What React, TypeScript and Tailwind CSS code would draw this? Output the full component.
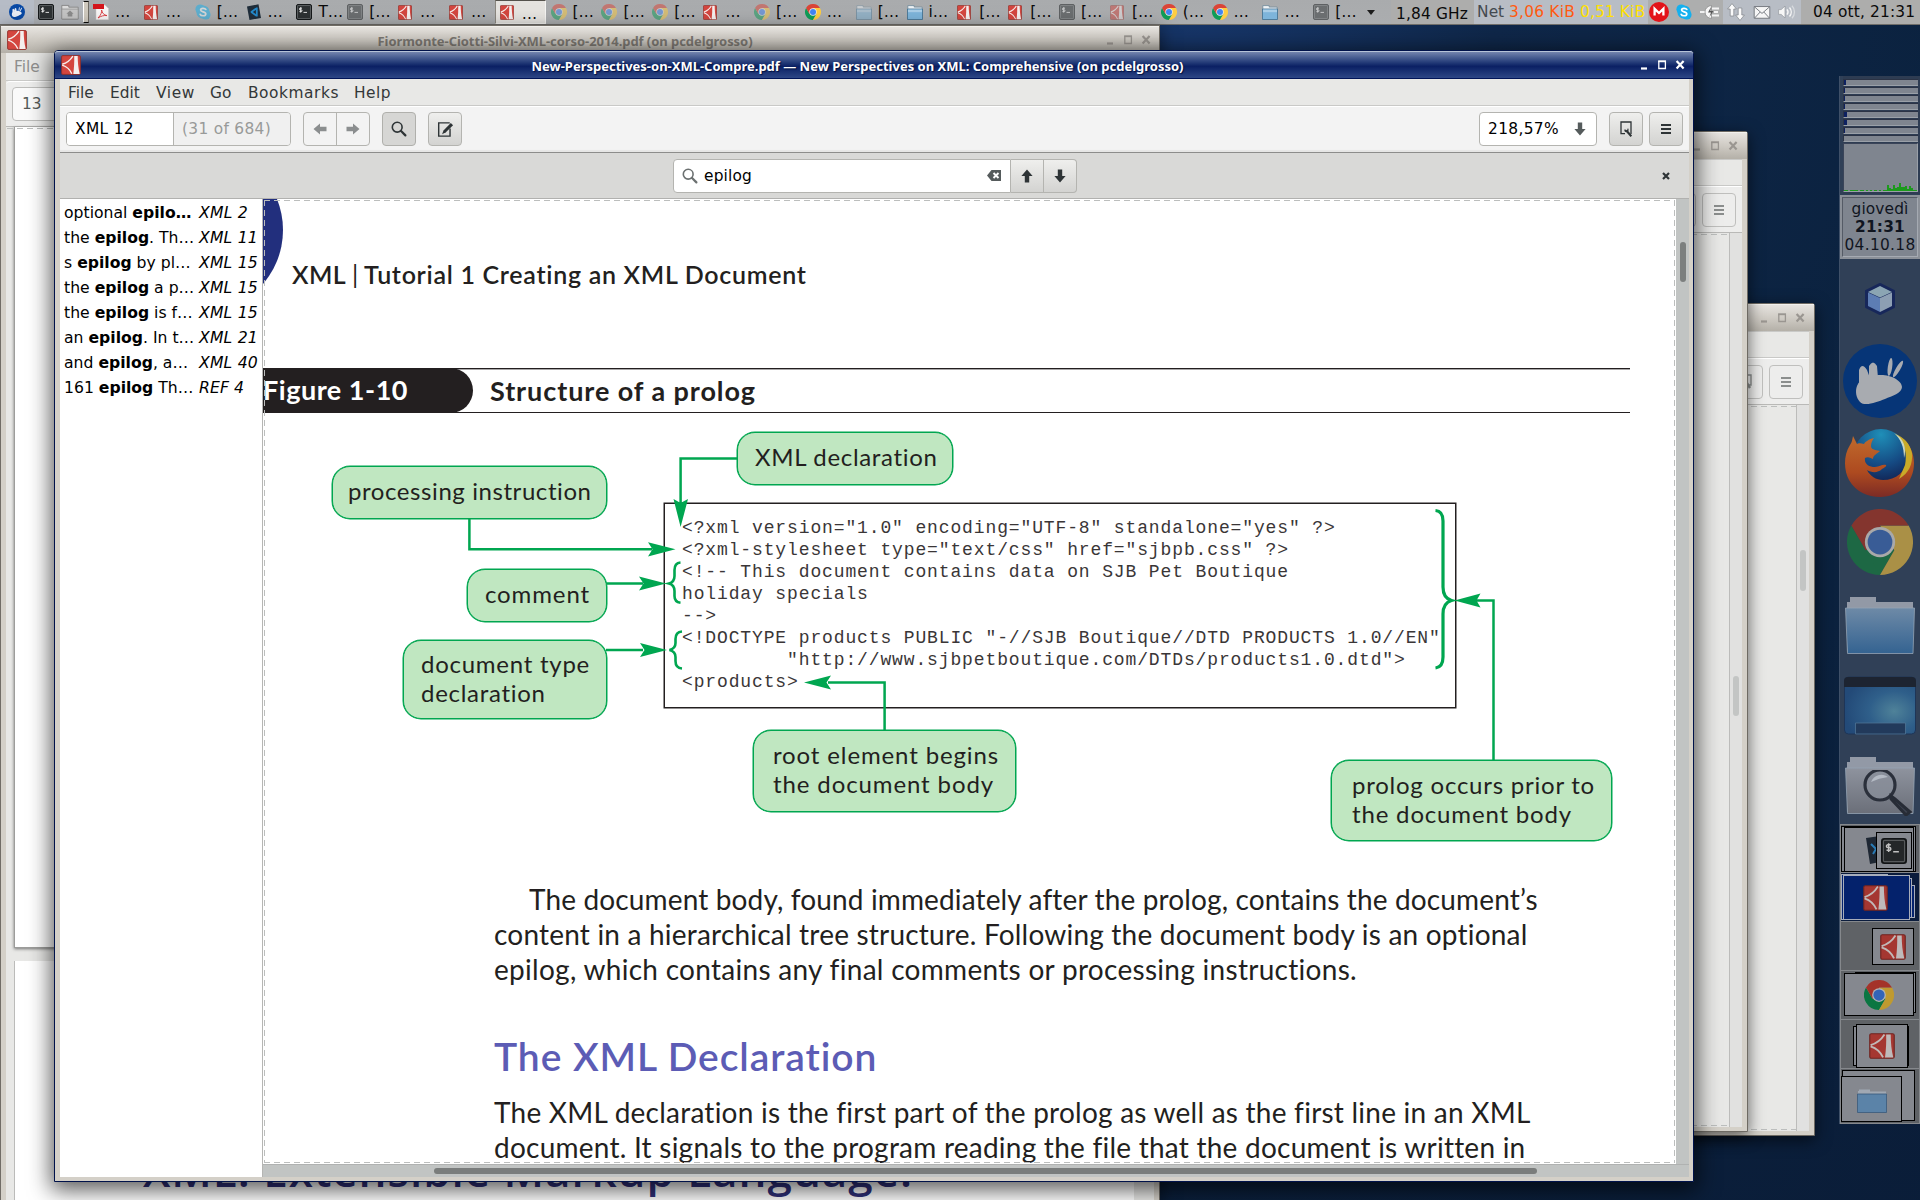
import React, { useLayoutEffect, useRef, useState } from "react";

/* ---------- text helper: spreads a line's letters over a given measure ---------- */
function Fit({ w, className = "", children }: { w: number; className?: string; children: string }) {
  const ref = useRef<HTMLSpanElement>(null);
  const [ls, setLs] = useState(0);
  useLayoutEffect(() => {
    const el = ref.current;
    if (!el) return;
    el.style.letterSpacing = "0px";
    const n = el.getBoundingClientRect().width;
    const v = (w - n) / children.length;
    el.style.letterSpacing = v + "px";
    setLs(v);
  }, [w, children]);
  return (
    <span ref={ref} className={"inline-block whitespace-pre " + className} style={{ letterSpacing: ls + "px" }}>
      {children}
    </span>
  );
}

/* ---------- icons ---------- */
type IP = { className?: string };

const Evince = ({ className = "" }: IP) => (
  <svg viewBox="0 0 20 20" preserveAspectRatio="none" className={className}>
    <rect x="0.6" y="0.6" width="18.8" height="18.8" rx="1.2" fill="#d4463f" stroke="#8e2f2a" strokeWidth="0.9" />
    <path d="M13.2 1.1h3.5c0 6 .6 12 2 17.800h-6.400c.8-6 1.100-12 .9-17.800z" fill="#f4efee" />
    <path d="M11.900 1.200C9.400 5.200 5.400 8.200 1.200 9.300M1.200 10.200C5.600 11.600 9 14.600 10.800 18.800" fill="none" stroke="#f7eeec" strokeWidth="1.400" />
  </svg>
);

const Chrome = ({ className = "" }: IP) => (
  <svg viewBox="0 0 48 48" className={className}>
    <path d="M24 24 24 48A24 24 0 0 1 3.2 12L13.6 30z" fill="#0f9d58" />
    <path d="M13.600 30 24 48 34.400 30 24 24z" fill="#0f9d58" />
    <path d="M24 12H44.8A24 24 0 0 1 24 48L34.4 30z" fill="#ffcd40" />
    <path d="M3.2 12 13.6 30 24 24 24 12 44.8 12A24 24 0 0 0 3.2 12z" fill="#db4437" />
    <circle cx="24" cy="24" r="11" fill="#f1f1f1" />
    <circle cx="24" cy="24" r="9" fill="#4285f4" />
  </svg>
);

const Term = ({ className = "" }: IP) => (
  <svg viewBox="0 0 16 16" className={className}>
    <rect x="0.5" y="0.5" width="15" height="15" rx="1.5" fill="#2d3133" stroke="#15181a" />
    <rect x="1.5" y="1.5" width="13" height="13" rx="0.6" fill="none" stroke="#6d7173" strokeWidth="0.7" />
    <path d="M6 4.2H4.2a.8.8 0 0 0 0 1.7h1a.8.8 0 0 1 0 1.7H3.4M4.7 3.2v5.4M7.5 8.4H11" stroke="#f1f1f1" strokeWidth="0.9" fill="none" />
  </svg>
);

const Folder = ({ className = "" }: IP) => (
  <svg viewBox="0 0 16 16" className={className}>
    <path d="M.8 15V1.6h6.4v1.5h8V15z" fill="#eef2f5" stroke="#6d8797" strokeWidth="0.8" />
    <path d="M.5 5h15v10.5H.5z" fill="#7db4da" stroke="#41708f" strokeWidth="0.8" />
    <path d="M1 5.6h14v2.6H1z" fill="#a9cde6" />
  </svg>
);

const Skype = ({ className = "" }: IP) => (
  <svg viewBox="0 0 16 16" className={className}>
    <circle cx="5.2" cy="5.2" r="4.8" fill="#15b0ee" />
    <circle cx="10.8" cy="10.8" r="4.8" fill="#15b0ee" />
    <circle cx="8" cy="8" r="6.6" fill="#15b0ee" />
    <path d="M10.8 5.4C10 4 5.6 3.7 5.6 6c0 2.4 5.2 1.4 5.2 4 0 2.3-4.8 2.2-5.6.3" stroke="#fff" strokeWidth="1.7" fill="none" strokeLinecap="round" />
  </svg>
);

const VsCode = ({ className = "" }: IP) => (
  <svg viewBox="0 0 16 16" className={className}>
    <path d="M1 2.5 12.5.3 15 14 3.5 16z" fill="#1f2d3a" />
    <path d="M10.500 4.200 5 8.200M10.500 11.800 5 7.800M10.800 3.500v9" stroke="#2489ca" strokeWidth="1.800" fill="none" />
  </svg>
);

const PdfDoc = ({ className = "" }: IP) => (
  <svg viewBox="0 0 16 16" className={className}>
    <path d="M3 1h9l3.5 3.5V15.8H3z" fill="#f7f5f5" stroke="#c9c4c4" strokeWidth="0.5" />
    <path d="M0 0h11v5H0z" fill="#d3151b" />
    <path d="M5 14c3-3 4-6 3.6-8 .4 3 2.4 5 5.4 5.6-3-.4-6 .4-9 2.4z" fill="none" stroke="#d8343a" strokeWidth="0.9" />
  </svg>
);

const Mouse = ({ className = "" }: IP) => (
  <svg viewBox="0 0 74 74" className={className}>
    <circle cx="37" cy="37" r="37" fill="#0849a5" />
    <g fill="#e9edf5">
      <path d="M14 42c3-8 12-11 22-11 10-1 23 5 23 12 0 6-10 9-17 12-8 3-20 8-25 3-4-4-5-11-3-16z" />
      <path d="M16 40V26q3-8 8 0l3 8zM26 34V22q4-7 8 0l1 12z" />
      <ellipse cx="47" cy="23" rx="2.2" ry="9" transform="rotate(8 47 23)" />
      <ellipse cx="55" cy="25" rx="2.2" ry="9.5" transform="rotate(30 55 25)" />
    </g>
  </svg>
);

const WinButtons = ({ className = "" }: IP) => (
  <svg viewBox="0 0 44 10" className={"h-[10px] w-[44px] " + className}>
    <path d="M0 8.5h6" stroke="currentColor" strokeWidth="2.2" />
    <path d="M17.8 1.2h6.6v7.3h-6.6z" fill="none" stroke="currentColor" strokeWidth="1.3" />
    <path d="M17.2 1.4h7.8" stroke="currentColor" strokeWidth="1.6" />
    <path d="m35.6 1 7 7.6M42.6 1l-7 7.6" stroke="currentColor" strokeWidth="2.2" />
  </svg>
);

const Burger = ({ className = "" }: IP) => (
  <svg viewBox="0 0 10 10" className={"h-[10px] w-[10px] " + className}>
    <path d="M0 1h10M0 5h10M0 9h10" stroke="currentColor" strokeWidth="2" />
  </svg>
);

const Arrow = ({ className = "" }: IP) => (
  <svg viewBox="0 0 14 14" className={"h-[14px] w-[14px] " + className}>
    <path d="M7 .5 12.6 7H9.2v6.5H4.8V7H1.4z" fill="currentColor" />
  </svg>
);

const Magnifier = ({ className = "" }: IP) => (
  <svg viewBox="0 0 16 16" className={"h-4 w-4 " + className}>
    <circle cx="6.2" cy="6.2" r="4.9" fill="none" stroke="currentColor" strokeWidth="1.6" />
    <path d="m9.8 9.8 4.6 4.6" stroke="currentColor" strokeWidth="2.2" strokeLinecap="round" />
  </svg>
);

/* ---------- dashed edges of a scrolled view ---------- */
const hDash = "pointer-events-none absolute h-px bg-[repeating-linear-gradient(90deg,#bcbebd_0_6px,transparent_6px_10px)] ";
const vDash = "pointer-events-none absolute w-px bg-[repeating-linear-gradient(180deg,#bcbebd_0_6px,transparent_6px_10px)] ";

/* ---------- top panel ---------- */
const faded = "opacity-50";
const tasks: { I: React.FC<IP>; t: string; c?: string; active?: boolean }[] = [
  { I: PdfDoc, t: "…" },
  { I: Evince, t: "…" },
  { I: Skype, t: "[…", c: faded },
  { I: VsCode, t: "…" },
  { I: Term, t: "T…" },
  { I: Term, t: "[…", c: faded },
  { I: Evince, t: "…" },
  { I: Evince, t: "…" },
  { I: Evince, t: "…", active: true },
  { I: Chrome, t: "[…", c: faded },
  { I: Chrome, t: "[…", c: faded },
  { I: Chrome, t: "[…", c: faded },
  { I: Evince, t: "…" },
  { I: Chrome, t: "[…", c: faded },
  { I: Chrome, t: "…" },
  { I: Folder, t: "[…", c: faded },
  { I: Folder, t: "i…" },
  { I: Evince, t: "[…" },
  { I: Evince, t: "[…" },
  { I: Term, t: "[…", c: faded },
  { I: Evince, t: "[…", c: faded },
  { I: Chrome, t: "(…" },
  { I: Chrome, t: "…" },
  { I: Folder, t: "…" },
  { I: Term, t: "[…", c: faded },
];

function TopPanel() {
  return (
    <div className="flex h-[25px] w-full items-stretch border-b border-[#6f6d69] bg-linear-to-b from-[#a9abad] to-[#abadaf] text-[15.4px] leading-[24px] text-[#0a0a0a]">
      <div className="flex w-[83px] items-center bg-[#b6bcc6] pl-[9px]">
        <Mouse className="h-4 w-4" />
        <div className="ml-[9px] flex h-full w-[49px] items-center gap-[7px] bg-[#b0b3b8] pl-[4px]">
          <Term className="h-4 w-4" />
          <svg viewBox="0 0 18 16" className="h-4 w-[18px]">
            <path d="M.8 15V1.4h7v1.8h9.4V15z" fill="#dcdcdc" stroke="#858585" strokeWidth="0.9" />
            <path d="M.8 5h16.4v10H.8z" fill="#c4c4c4" stroke="#8b8b8b" strokeWidth="0.7" />
            <path d="m9 6.4 3.6 3.4h-1.3v2.8H6.7V9.8H5.4z" fill="#8a8a8a" />
          </svg>
        </div>
      </div>
      <div className="my-px mr-px w-[6px] border border-r-[#6f6b64] border-l-white bg-[#cfc9be]" />
      {tasks.map((k, i) => (
        <div
          key={i}
          className={
            "flex w-[50.85px] shrink-0 items-center gap-[6px] " +
            (k.active ? "-ml-[2px] mr-[2px] border border-[#f5f4f2] border-t-[#55524c] border-l-[#8a867e] bg-[#e5e3df] pl-[4px]" : "pl-[3px]")
          }
        >
          <k.I className={(k.I === Evince ? "mr-[2px] h-[15px] w-[14px] " : "h-4 w-4 ") + (k.c || "")} />
          <span className={k.active ? "pt-[3px]" : ""}>{k.t}</span>
        </div>
      ))}
      <div className="ml-[6px] flex w-[24px] items-center">
        <svg viewBox="0 0 8 5" className="h-[5px] w-[8px]">
          <path d="M0 0h8L4 5z" fill="#1c1c1c" />
        </svg>
      </div>
      <div className="w-[83px] shrink-0 bg-[#adadac] pt-[2px] pl-[5px]">
        <Fit w={72}>1,84 GHz</Fit>
      </div>
      <div className="flex w-[174px] shrink-0 bg-[#b8bdc5] pl-[3px]">
        <Fit w={32} className="text-[#444a50]">Net </Fit>
        <Fit w={71} className="text-[#ff5a10]">3,06 KiB </Fit>
        <Fit w={65} className="text-[#ffe000]">0,51 KiB</Fit>
      </div>
      <div className="flex w-[75px] shrink-0 items-center bg-[#adaeae] pl-[1px]">
        <svg viewBox="0 0 20 20" className="h-5 w-5">
          <circle cx="10" cy="10" r="10" fill="#e3131a" />
          <path d="M5.6 13.6V6.8L10 11l4.4-4.2v6.8" fill="none" stroke="#fff" strokeWidth="2.3" />
        </svg>
        <Skype className="ml-[7px] h-4 w-4" />
        <svg viewBox="0 0 20 16" className="ml-[8px] h-4 w-5">
          <path d="M0 8h5" stroke="#fff" strokeWidth="1.6" />
          <path d="M5 8a6.5 6.5 0 0 1 6.5-6.4V14.4A6.5 6.5 0 0 1 5 8z" fill="#f6f6f6" stroke="#777" strokeWidth="0.6" />
          <path d="M12 4.5h7M12 11.5h7M14 8h4" stroke="#f3f3f3" strokeWidth="2" />
          <path d="M11 3 8 8.4h3L9.4 13l4-6h-3z" fill="#555" />
        </svg>
      </div>
      <div className="flex w-[78px] shrink-0 items-center bg-[#b8bdc5] pl-[4px]">
        <svg viewBox="0 0 18 18" className="h-[18px] w-[18px]">
          <path d="M5 .6 9.4 6H6.8v7H3.2V6H.6zM13 17.4 8.6 12h2.6V5h3.6v7h2.6z" fill="#fafafa" stroke="#7e8288" strokeWidth="0.7" />
        </svg>
        <svg viewBox="0 0 18 14" className="ml-[8px] h-[13px] w-[18px]">
          <path d="M.6.6h16.8v12.6H.6z" fill="#f6f6f6" stroke="#70757b" />
          <path d="m1 1 8 7 8-7M1 13l6-6.5M17 13l-6-6.5" fill="none" stroke="#70757b" />
        </svg>
        <svg viewBox="0 0 18 16" className="ml-[7px] h-4 w-[18px]">
          <path d="M.6 5.6h2.6L7 2v12l-3.800-3.600H.6z" fill="#f7f7f7" stroke="#888d93" strokeWidth="0.6" />
          <path d="M9 5.400c1.200 1.500 1.200 3.700 0 5.200M11.500 3.500c2.300 2.600 2.300 6.400 0 9" fill="none" stroke="#f7f7f7" strokeWidth="1.400" />
          <path d="M14 1.800c3.300 3.600 3.300 8.800 0 12.400" fill="none" stroke="#d7dade" strokeWidth="1.300" />
        </svg>
      </div>
      <div className="flex-1 bg-[#adadac] pl-[12px]">
        <Fit w={102}>04 ott, 21:31</Fit>
      </div>
    </div>
  );
}

/* ---------- background windows ---------- */
function GreyTitle({ right, children }: { right: string; children?: React.ReactNode }) {
  return (
    <div className="relative flex h-[27px] shrink-0 items-center justify-center border-t border-[#f3f1ed] bg-linear-to-b from-[#e6e3df] via-[#cfcbc4] to-[#b4b0a8]">
      {children}
      <WinButtons className={"absolute top-[8px] text-[#9a9691] " + right} />
    </div>
  );
}

function BackWindowLeft() {
  return (
    <section className="absolute top-[25px] left-0 flex h-[1175px] w-[1160px] flex-col overflow-hidden border-t border-r border-l border-[#716d66] bg-[#d4d0c8] shadow-[0_4px_16px_rgba(0,0,0,0.5)]">
      <GreyTitle right="right-[8px]">
        <Evince className="absolute top-[3px] left-[6px] h-[20px] w-[20px]" />
        <Fit w={375} className="mt-[3px] ml-[-30px] font-['Noto_Sans'] text-[13px] font-bold text-[#7b7771]">Fiormonte-Ciotti-Silvi-XML-corso-2014.pdf (on pcdelgrosso)</Fit>
      </GreyTitle>
      <div className="mx-[5px] flex flex-1 flex-col bg-[#e8e8e6]">
        <div className="h-[28px] border-b border-[#c9c9c7] pl-[8px] text-[15.4px] leading-[29px] text-[#8f8f8d]">File</div>
        <div className="h-[46px] rounded-tl border-t border-b border-t-white border-b-[#b9b9b7] bg-[#ededec] pt-[5px] pl-[6px]">
          <div className="h-[34px] w-[100px] rounded border border-[#bdbdbb] bg-[#fafafa] pl-[9px] text-[15.4px] leading-[32px] text-[#555a59]">13</div>
        </div>
        <div className="relative mr-[26px] ml-[8px] h-[821px] border-b border-l border-[#9c9c9a] bg-white shadow-[0_1px_3px_rgba(0,0,0,0.5)]">
          <div className={hDash + "top-px right-0 -left-[8px]"} />
        </div>
        <div className="mt-[13px] mr-[20px] ml-[8px] flex-1 border-l border-[#bbbbb9] bg-white">
          <div className="pt-[190px] pl-[128px] font-['Open_Sans'] text-[44px] leading-[38px] font-semibold text-[#2f3079]">
            <Fit w={770}>XML: Extensible Markup Language.</Fit>
          </div>
        </div>
      </div>
    </section>
  );
}

function BackWindowSmall({ frame, thumb }: { frame: string; thumb: string }) {
  return (
    <section className={"absolute flex flex-col rounded-t-[3px] border border-[#6e6a63] bg-[#d4d0c8] shadow-[0_4px_16px_rgba(0,0,0,0.6)] " + frame}>
      <GreyTitle right="right-[9px]" />
      <div className="mr-[5px] mb-[4px] flex flex-1 flex-col bg-[#e8e8e6]">
        <div className="h-[27px] border-t border-b border-[#c9c9c7]" />
        <div className="flex h-[47px] items-center justify-end gap-[6px] border-t border-b border-t-white border-b-[#b9b9b7] bg-[#ededec] pr-[6px] text-[#8b8e8d]">
          <div className="flex h-[34px] w-[34px] items-center justify-center rounded border border-[#bfbfbd]">
            <svg viewBox="0 0 12 16" className="h-4 w-3"><path d="M1 1h10v10H1z" fill="none" stroke="currentColor" strokeWidth="1.4" /><path d="m5 6 5 8" stroke="currentColor" strokeWidth="2.5" /></svg>
          </div>
          <div className="flex h-[34px] w-[34px] items-center justify-center rounded border border-[#bfbfbd]">
            <Burger />
          </div>
        </div>
        <div className="flex flex-1">
          <div className="relative flex-1">
            <div className={hDash + "inset-x-0 top-px"} />
            <div className={hDash + "inset-x-0 bottom-px"} />
          </div>
          <div className="w-[13px] border-l border-[#bcbcba] bg-[#e1e1e0]">
            <div className={"ml-[3px] w-[6px] rounded-full bg-[#c3c5c4] " + thumb} />
          </div>
        </div>
      </div>
    </section>
  );
}

/* ---------- document viewer ---------- */
const btn = "flex items-center justify-center h-[34px] border border-[#b4b4b0] bg-linear-to-b from-[#efefed] to-[#d3d3d1] text-[#2e3436]";

function Toolbar() {
  return (
    <div className="flex h-[47px] items-center border-t border-b border-t-white border-b-[#8d8d8b] bg-[#f3f3f3] pr-[6px] pb-px pl-[6px] text-[15.4px] shadow-[inset_0_-2px_1px_#e6e6e5]">
      <div className="flex h-[34px] w-[225px] overflow-hidden rounded-[4px] border border-[#b4b4b0] leading-[32px]">
        <div className="w-[107px] border-r border-[#b4b4b0] bg-white pl-[8px] text-black"><Fit w={59}>XML 12</Fit></div>
        <div className="flex-1 bg-[#f0f0f0] pl-[8px] text-[#989a99]"><Fit w={89}>(31 of 684)</Fit></div>
      </div>
      <div className="ml-[12px] flex h-[34px] w-[67px] rounded-[4px] border border-[#b4b4b0] bg-[#f3f3f3] text-[#8b8e8f]">
        <div className="flex w-[33px] items-center justify-center border-r border-[#b4b4b0]"><Arrow className="-rotate-90" /></div>
        <div className="flex flex-1 items-center justify-center"><Arrow className="rotate-90" /></div>
      </div>
      <div className="ml-[12px] flex h-[34px] w-[34px] items-center justify-center rounded-[4px] border border-[#b0b0ac] bg-[#d6d6d4] text-[#2e3436]"><Magnifier /></div>
      <div className={"ml-[12px] w-[34px] rounded-[4px] " + btn}>
        <svg viewBox="0 0 18 18" className="h-[17px] w-[17px]">
          <path d="M13.500 2H1.800v14h12V8" fill="none" stroke="currentColor" strokeWidth="1.500" />
          <path d="M14.600 2.200 17 4.400 9.400 12 5.400 14l1.500-4z" fill="currentColor" />
        </svg>
      </div>
      <div className="ml-auto flex h-[34px] w-[118px] items-center rounded-[4px] border border-[#b4b4b0] bg-white pl-[8px] leading-[32px] text-black">
        <Fit w={71}>218,57%</Fit>
        <Arrow className="ml-[14px] rotate-180 text-[#555b5c]" />
      </div>
      <div className={"ml-[12px] w-[34px] rounded-[4px] " + btn}>
        <svg viewBox="0 0 12 18" className="h-[18px] w-[12px]">
          <path d="M5 13.700H1V2h10v12" fill="none" stroke="currentColor" strokeWidth="1.300" />
          <path d="M7.200 11.500 11.300 16.300" stroke="currentColor" strokeWidth="2.200" />
          <path d="M4.600 9.300 4.300 11q1.700 2 3.600.8Q9.500 10 8 8l-1 2.300z" fill="currentColor" />
        </svg>
      </div>
      <div className={"ml-[6px] w-[34px] rounded-[4px] " + btn}><Burger /></div>
    </div>
  );
}

function SearchBar() {
  return (
    <div className="flex h-[46px] items-center border-b border-[#b1b1af] bg-[#d9d9d7] pr-[19px] pl-[613px] text-[15.4px]">
      <div className="flex h-[34px] w-[338px] items-center rounded-l-[4px] border border-[#b4b4b0] bg-white pr-[9px] pl-[8px] leading-[32px] text-black">
        <Magnifier className="mr-[6px] text-[#6b7070]" />
        <Fit w={48} className="pt-px">epilog</Fit>
        <svg viewBox="0 0 14 11" className="ml-auto h-[11px] w-[14px]">
          <path d="M4.500 0H14v11H4.500L0 5.500z" fill="#555b5c" />
          <path d="m6.500 3 5 5M11.500 3l-5 5" stroke="#fff" strokeWidth="1.900" />
        </svg>
      </div>
      <div className={"w-[33px] border-l-0 " + btn}><Arrow /></div>
      <div className={"w-[33px] rounded-r-[4px] border-l-0 " + btn}><Arrow className="rotate-180" /></div>
      <svg viewBox="0 0 8 8" className="ml-auto h-[8px] w-[8px]">
        <path d="m1 1 6 6M7 1 1 7" stroke="#2e3436" strokeWidth="2.200" />
      </svg>
    </div>
  );
}

const hits: [string, string, string, string, number][] = [
  ["optional ", "epilo…", "", "XML 2", 49],
  ["the ", "epilog", ". Th…", "XML 11", 59],
  ["s ", "epilog", " by pl…", "XML 15", 59],
  ["the ", "epilog", " a p…", "XML 15", 59],
  ["the ", "epilog", " is f…", "XML 15", 59],
  ["an ", "epilog", ". In t…", "XML 21", 59],
  ["and ", "epilog", ", a…", "XML 40", 59],
  ["161 ", "epilog", " Th…", "REF 4", 45],
];

function HitList() {
  return (
    <aside className="w-[203px] shrink-0 border-r border-[#b5b5b3] bg-white pt-px pl-[4px] text-[15.65px] leading-[25px] text-black">
      {hits.map((h, i) => (
        <div key={i} className="flex h-[25px] whitespace-pre">
          <span className="w-[135px]">{h[0]}<b>{h[1]}</b>{h[2]}</span>
          <Fit w={h[4]} className="italic">{h[3]}</Fit>
        </div>
      ))}
    </aside>
  );
}

const code = [
  '<?xml version="1.0" encoding="UTF-8" standalone="yes" ?>',
  '<?xml-stylesheet type="text/css" href="sjbpb.css" ?>',
  "<!-- This document contains data on SJB Pet Boutique",
  "holiday specials",
  "-->",
  '<!DOCTYPE products PUBLIC "-//SJB Boutique//DTD PRODUCTS 1.0//EN"',
  '         "http://www.sjbpetboutique.com/DTDs/products1.0.dtd">',
  "<products>",
];

const callout = "absolute border border-[#00a650] shadow-[0_0_0_0.5px_#00a650] bg-[#c0e7c1] rounded-[18px] text-[24px] leading-[29px] text-[#231f20] ";

function Figure() {
  return (
    <div className="relative h-[469px]">
      <div className="absolute top-[90px] left-[401px] h-[205px] w-[792px] border border-[#231f20] pt-[13px] pl-[17px] font-['Liberation_Mono'] text-[18px] leading-[22px] tracking-[0.87px] whitespace-pre text-[#3a3637] shadow-[0_0_0_0.5px_#231f20]">
        {code.map((c, i) => <div key={i} className="h-[22px]">{c}</div>)}
      </div>
      <svg viewBox="263 413 1413 469" className="absolute inset-0 h-[469px] w-[1413px]">
        <g fill="none" stroke="#00a650" strokeWidth="2.500">
          <path d="M738 458.500H680.600V505" />
          <path d="M469.400 519V549.300H652" />
          <path d="M607 583.500H643" />
          <path d="M606 650H643" />
          <path d="M884.600 730V682.500H828" />
          <path d="M1493.500 760V600.500H1476" />
        </g>
        <g fill="#00a650">
          <path d="M680.600 527 673.500 499 680.600 503 688 499z" />
          <path d="M675.500 549.300 648 542.200 652.500 549.300 648 556.500z" />
          <path d="M666 583.500 639 576.500 643.500 583.500 639 590.500z" />
          <path d="M667 650 640 643 644.500 650 640 657z" />
          <path d="M804 682.500 831 675.500 826.500 682.500 831 689.500z" />
          <path d="M1454.500 600.500 1480.500 593.500 1476.500 600.500 1480.500 607.500z" />
        </g>
        <g fill="none" stroke="#00a650" strokeWidth="2.600">
          <path d="M680.500 562.500Q674.500 563 674.500 570V576Q674.500 582 669 583.500 674.500 585 674.500 591V596Q674.500 602 680.500 602.800" />
          <path d="M682 631.500Q675.500 632 675.500 639V643Q675.500 648.500 669.500 650 675.500 651.500 675.500 657V661Q675.500 668 682 668.500" />
          <path d="M1435.500 510.500Q1443 511 1443 521V587Q1443 598 1451.500 600.500 1443 603 1443 614V657Q1443 667 1435.500 668" strokeWidth="3.200" />
        </g>
      </svg>
      <div className={callout + "top-[53px] left-[69px] h-[53px] w-[275px] pt-[9px] pl-[15px]"}><Fit w={244}>processing instruction</Fit></div>
      <div className={callout + "top-[19px] left-[474px] h-[53px] w-[216px] pt-[9px] pl-[17px]"}><Fit w={183}>XML declaration</Fit></div>
      <div className={callout + "top-[156px] left-[204px] h-[53px] w-[140px] pt-[9px] pl-[17px]"}><Fit w={105}>comment</Fit></div>
      <div className={callout + "top-[227px] left-[140px] flex h-[79px] w-[204px] flex-col items-start pt-[8px] pl-[17px]"}>
        <Fit w={169}>document type</Fit>
        <Fit w={125}>declaration</Fit>
      </div>
      <div className={callout + "top-[317px] left-[490px] flex h-[82px] w-[263px] flex-col items-start pt-[9px] pl-[19px]"}>
        <Fit w={226}>root element begins</Fit>
        <Fit w={221}>the document body</Fit>
      </div>
      <div className={callout + "top-[347px] left-[1068px] flex h-[81px] w-[281px] flex-col items-start pt-[9px] pl-[20px]"}>
        <Fit w={243}>prolog occurs prior to</Fit>
        <Fit w={220}>the document body</Fit>
      </div>
    </div>
  );
}

function Page() {
  return (
    <div className="relative h-[965px] w-[1413px] overflow-hidden bg-white font-['Lato'] text-[#231f20]">
      <svg viewBox="0 0 22 90" className="absolute top-0 left-0 h-[90px] w-[22px]">
        <circle cx="-63" cy="31" r="83" fill="#222f7d" />
      </svg>
      <div className="flex h-[169px] pt-[60px] pl-[29px] text-[25px] leading-[30px] font-semibold">
        <Fit w={54}>XML</Fit>
        <span className="ml-[6px] w-[12px] font-normal">|</span>
        <Fit w={443}>Tutorial 1 Creating an XML Document</Fit>
      </div>
      <div className="flex h-[45px] w-[1367px] items-center border-t border-b border-[#231f20] text-[27px] leading-[44px] font-bold shadow-[inset_0_1px_#a9a7a8]">
        <div className="-my-px h-[45px] w-[210px] rounded-r-full bg-[#231f20] text-white"><Fit w={145}>Figure 1-10</Fit></div>
        <Fit w={266} className="ml-[17px]">Structure of a prolog</Fit>
      </div>
      <Figure />
      <div className="flex flex-col items-start pl-[231px] text-[28px] leading-[35px]">
        <Fit w={1008} className="ml-[35px]">The document body, found immediately after the prolog, contains the document’s</Fit>
        <Fit w={1034}>content in a hierarchical tree structure. Following the document body is an optional</Fit>
        <Fit w={863}>epilog, which contains any final comments or processing instructions.</Fit>
        <Fit w={384} className="mt-[44px] text-[39px] leading-[50px] font-semibold text-[#5c5cb5]">The XML Declaration</Fit>
        <Fit w={1036} className="mt-[14px]">The XML declaration is the first part of the prolog as well as the first line in an XML</Fit>
        <Fit w={1030}>document. It signals to the program reading the file that the document is written in</Fit>
      </div>
      <div className={hDash + "inset-x-px top-px"} />
      <div className={hDash + "inset-x-px bottom-px"} />
      <div className={vDash + "inset-y-px left-px"} />
      <div className={vDash + "inset-y-px right-px"} />
    </div>
  );
}

function MainWindow() {
  return (
    <section className="absolute top-[50px] left-[54px] flex h-[1132px] w-[1640px] flex-col rounded-t-[4px] border border-[#00124a] bg-[#d4d0c8] shadow-[0_5px_22px_3px_rgba(0,0,0,0.65)]">
      <header className="relative flex h-[28px] shrink-0 items-center justify-center rounded-t-[3px] border-t border-b border-t-[#b6c3d8] border-b-[#001458] bg-linear-to-b from-[#7384ae] via-[#0b2064] via-55% to-[#2d4685]">
        <Evince className="absolute top-[3px] left-[6px] h-[20px] w-[20px]" />
        <Fit w={652} className="mt-[3px] ml-[-33px] font-['Noto_Sans'] text-[13px] font-bold text-white [text-shadow:1px_1px_1px_#001040]">New-Perspectives-on-XML-Compre.pdf — New Perspectives on XML: Comprehensive (on pcdelgrosso)</Fit>
        <WinButtons className="absolute top-[8px] right-[8px] text-white" />
      </header>
      <div className="mr-[4px] mb-[4px] ml-px flex flex-1 flex-col border-l-4 border-[#d4d0c8]">
        <nav className="flex h-[27px] shrink-0 border-b border-[#c9c9c7] bg-[#e8e8e6] pl-[8px] text-[15.4px] leading-[28px] text-[#333738]">
          <span className="w-[42px]">File</span>
          <span className="w-[46px]">Edit</span>
          <span className="w-[54px]"><Fit w={39}>View</Fit></span>
          <span className="w-[38px]">Go</span>
          <span className="w-[106px]"><Fit w={91}>Bookmarks</Fit></span>
          <span><Fit w={37}>Help</Fit></span>
        </nav>
        <Toolbar />
        <SearchBar />
        <div className="flex flex-1">
          <HitList />
          <div className="flex flex-1 flex-col bg-[#c1c4c3]">
            <div className="flex">
              <Page />
              <div className="flex-1 pt-[43px] pl-[4px]">
                <div className="h-[40px] w-[6px] rounded-full bg-[#7c7f7e]" />
              </div>
            </div>
            <div className="flex-1 border-t border-[#b0b2b1] pt-[3px] pl-[171px]">
              <div className="h-[6px] w-[1103px] rounded-full bg-[#7a7d7c]" />
            </div>
          </div>
        </div>
      </div>
    </section>
  );
}

/* ---------- right dock ---------- */
const load = [1, 1, 0, 1, 1, 1, 1, 0, 1, 1, 0, 1, 0, 1, 0, 1, 1, 0, 1, 0, 1, 1, 6, 3, 2, 6, 3, 4, 8, 4, 4, 5, 2, 5, 3, 1, 1];

function Dock() {
  return (
    <div className="absolute top-[76px] left-[1839px] flex h-[1048px] w-[81px] flex-col items-center border-l border-[#3f5068] bg-[#304057]">
      <div className="h-[118px] w-[77px] shrink-0 self-end bg-[#2e3c52] pt-[3px] pr-[2px]">
        {[2, 1, 1, 1, 3, 3, 1, 0].map((v, i) => (
          <div key={i} className="mb-px h-[7px] border-t border-b border-l border-t-[#2b3345] border-b-[#9aa0a8] border-l-[#2b3345] bg-[#7f858f]">
            <div className="h-full bg-[#0d2160]" style={{ width: v + "px" }} />
          </div>
        ))}
        <div className="mt-px flex h-[49px] items-end border border-t-[#3a4458] border-r-[#9aa0a8] border-b-[#9aa0a8] border-l-[#3a4458] bg-[#7f858f]">
          {load.map((v, i) => (
            <div key={i} className="w-[2px] bg-[#1c9a1c]" style={{ height: v + "px" }} />
          ))}
        </div>
      </div>
      <div className="mt-px h-[64px] w-full shrink-0 bg-[#8b9098] p-[2px]">
        <div className="flex h-full flex-col items-center border border-t-[#555b66] border-r-[#a5aab2] border-b-[#a5aab2] border-l-[#555b66] bg-[#7f858f] text-[15.4px] leading-[18px] text-[#10151f]">
          <Fit w={57} className="mt-[2px]">giovedì</Fit>
          <b><Fit w={50}>21:31</Fit></b>
          <Fit w={71}>04.10.18</Fit>
        </div>
      </div>
      <svg viewBox="0 0 30 32" className="mt-[24px] h-[32px] w-[30px] shrink-0">
        <path d="M15 1 29 8v16L15 31 1 24V8z" fill="#17275a" stroke="#17275a" strokeWidth="2" strokeLinejoin="round" />
        <path d="M15 3 27 9 15 14.500 3 9z" fill="#8ba5b3" />
        <path d="M3 9.500 15 15v14L3 23z" fill="#5d7db4" />
        <path d="M27 9.500 15 15v14l12-6z" fill="#8d9fb3" />
      </svg>
      <Mouse className="mt-[29px] h-[74px] w-[74px] shrink-0 brightness-[0.72]" />
      <svg viewBox="0 0 70 70" className="mt-[10px] h-[70px] w-[70px] shrink-0">
        <defs>
          <radialGradient id="globe" cx="0.500" cy="0.100" r="0.900"><stop offset="0" stopColor="#1f8fb8" /><stop offset="0.600" stopColor="#154a83" /><stop offset="1" stopColor="#111f4e" /></radialGradient>
          <linearGradient id="fox" x1="0" y1="0" x2="0" y2="1"><stop offset="0" stopColor="#c06a2c" /><stop offset="0.600" stopColor="#ad4a20" /><stop offset="1" stopColor="#7c2b25" /></linearGradient>
        </defs>
        <circle cx="36" cy="29" r="28" fill="url(#globe)" />
        <path d="M8 8C7 13 7 14 5 17-2 28-1 43 4 52 11 64 23 69 35 69 55 69 69 54 69 35c0-9-4-18-10-24 3 6 4 13 4 19-2 14-12 22-25 22-7 0-13-4-16-10 5 3 11 3 15-1 2-1 5-3 4-4-4-1-6 2-11 2-6 0-11-3-10-9 3-2 6 0 8 1 0-4 4-5 7-8-6-1-9-2-9-5 0-3 1-5 3-8-5 1-9 4-10 6-3-1-6-1-7 0z" fill="url(#fox)" />
        <path d="M50 6c11 8 12 22 10 31l-6 14c10-6 14-15 13-26C65 16 59 9 50 6z" fill="#c9ab28" />
        <path d="M49 5c7 6 10 14 10 25 3-9 0-20-10-25z" fill="#ccd6c0" />
      </svg>
      <Chrome className="mt-[11px] h-[66px] w-[66px] shrink-0 saturate-[0.75] brightness-[0.7]" />
      <BigFolder className="mt-[21px]" top="#6e8aa7" bottom="#346391" />
      <svg viewBox="0 0 72 60" className="mt-[20px] h-[60px] w-[72px] shrink-0">
        <defs><radialGradient id="desk" cx="0.700" cy="0.600" r="0.700"><stop offset="0" stopColor="#4f8299" /><stop offset="0.500" stopColor="#2f5f8a" /><stop offset="1" stopColor="#234a78" /></radialGradient></defs>
        <rect x="0.500" y="1" width="71" height="57" rx="4" fill="url(#desk)" stroke="#1e3557" />
        <path d="M0 11V5Q0 1 4 1H68Q72 1 72 5V11z" fill="#1d2431" />
        <path d="M11.500 58V47H61.500V58z" fill="#223a5b" stroke="#4f7394" strokeWidth="0.800" />
      </svg>
      <div className="relative mt-[20px] h-[62px] shrink-0">
        <BigFolder className="" top="#8e939e" bottom="#6b6f79" />
        <svg viewBox="0 0 50 46" className="absolute top-[14px] left-[18px] h-[46px] w-[50px]">
          <circle cx="17" cy="15" r="15" fill="#8a909b" fillOpacity="0.700" stroke="#2b303b" strokeWidth="3.200" />
          <path d="M8 12a11 11 0 0 1 17-5Q16 8 8 12z" fill="#b4bac4" />
          <path d="m28 26 4 3 15 13-4 3L28 29z" stroke="#272c36" strokeWidth="3" fill="#3d434f" />
        </svg>
      </div>
      <Pager />
    </div>
  );
}

function BigFolder({ className, top, bottom }: { className: string; top: string; bottom: string }) {
  const id = "bf" + top.slice(1);
  return (
    <svg viewBox="0 0 70 60" className={"h-[60px] w-[70px] shrink-0 " + className}>
      <defs><linearGradient id={id} x1="0" y1="0" x2="0" y2="1"><stop offset="0" stopColor={top} /><stop offset="1" stopColor={bottom} /></linearGradient></defs>
      <path d="M2 56V6H5V1H31V6H68V56z" fill="#9299a6" />
      <path d="M.5 12H69.500L68 57.500H2.500z" fill={"url(#" + id + ")"} stroke="#94a3b4" strokeWidth="0.800" />
    </svg>
  );
}

const mini = "absolute flex items-center justify-center border border-black bg-[#85888f] ";

function Pager() {
  return (
    <div className="mt-auto flex w-full flex-col border border-[#85888c] bg-[#5f6266]">
      <div className="relative h-[48px] border-b border-[#85888c]">
        <div className={mini + "top-[1px] left-0 h-[46px] w-[75px]"} />
        <div className={mini + "top-[2px] left-[3px] h-[45px] w-[70px]"} />
        <svg viewBox="0 0 14 28" className="absolute top-[11px] left-[25px] h-[28px] w-[14px]"><path d="M0 2 14 0V26L4 28z" fill="#1e2733" /><path d="m5 8 5 5-3 5" stroke="#2a7bb5" strokeWidth="2" fill="none" /></svg>
        <div className={mini + "top-[7px] left-[35px] h-[37px] w-[36px]"}><Term className="h-[26px] w-[26px] brightness-[0.800]" /></div>
      </div>
      <div className="relative h-[49px] border-b border-[#85888c] bg-[#0b1c3c]">
        <div className="absolute top-[12px] left-[60px] h-[33px] w-[14px] border border-[#a7adba] bg-[#04226c]" />
        <div className="absolute top-[5px] left-[50px] h-[40px] w-[21px] border border-[#a7adba] bg-[#04226c]" />
        <div className="absolute top-[1px] left-0 h-[46px] w-[47px] border border-[#a7adba] bg-[#04226c]" />
        <div className="absolute top-[2px] left-[2px] flex h-[45px] w-[67px] items-center justify-center border border-[#a7adba] bg-[#04226c] pt-px pr-[2px]"><Evince className="h-[26px] w-[25px] brightness-[0.780]" /></div>
      </div>
      <div className="relative h-[49px] border-b border-[#85888c]">
        <div className={mini + "top-[6px] left-[31px] h-[37px] w-[42px]"}><Evince className="h-[26px] w-[26px] brightness-[0.780]" /></div>
      </div>
      <div className="relative h-[49px] border-b border-[#85888c]">
        <div className={mini + "top-[1px] left-[14px] h-[41px] w-[61px]"} />
        <div className={mini + "top-[2px] left-[3px] h-[43px] w-[70px]"}><Chrome className="h-[30px] w-[30px] brightness-[0.750]" /></div>
      </div>
      <div className="relative h-[49px] border-b border-[#85888c]">
        <div className={mini + "top-[6px] left-[12px] h-[40px] w-[56px]"} />
        <div className={mini + "top-[4px] left-[15px] h-[44px] w-[52px]"}><Evince className="h-[26px] w-[26px] brightness-[0.780]" /></div>
      </div>
      <div className="relative h-[54px]">
        <div className={mini + "top-[1px] left-[1px] h-[51px] w-[73px]"} />
        <div className={mini + "top-[7px] left-0 h-[46px] w-[61px] pt-[3px]"}>
          <svg viewBox="0 0 30 24" className="h-[24px] w-[30px]">
            <path d="M1 22V2H2V.5H13V2.500H29V22z" fill="#a0a8b3" />
            <path d="M.5 5H29.500V23.500H.5z" fill="#5b83a8" stroke="#39597a" strokeWidth="0.800" />
          </svg>
        </div>
      </div>
    </div>
  );
}

export default function App() {
  return (
    <div className="relative flex h-[1200px] w-[1920px] flex-col overflow-hidden bg-[#0b1f3c] bg-[radial-gradient(circle_at_62%_0%,#17366a_0%,#0f2749_18%,#0b223f_45%,#0a1b36_100%)] font-['DejaVu_Sans',sans-serif]">
      <TopPanel />
      <BackWindowSmall frame="top-[303px] left-[1500px] h-[833px] w-[315px]" thumb="mt-[145px] h-[41px]" />
      <BackWindowSmall frame="top-[131px] left-[1400px] h-[1001px] w-[348px]" thumb="mt-[443px] h-[40px]" />
      <BackWindowLeft />
      <MainWindow />
      <Dock />
    </div>
  );
}
